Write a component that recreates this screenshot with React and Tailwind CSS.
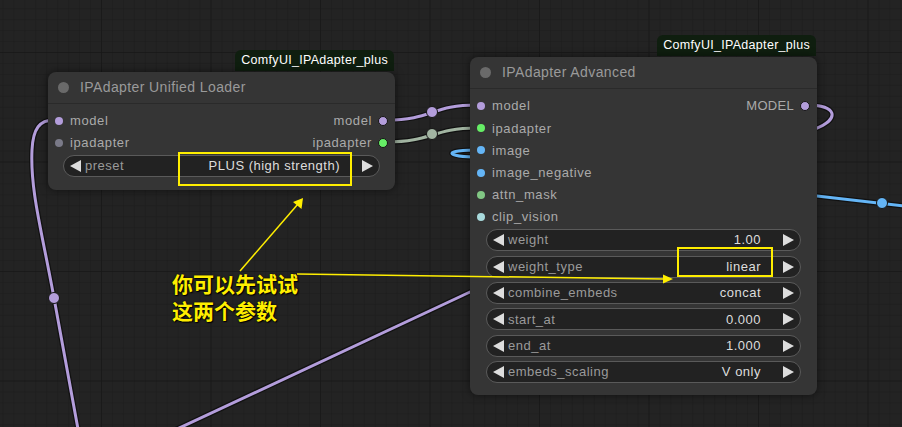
import React from 'react';

const Tri = ({ dir }) => (
    <svg width="11" height="12" viewBox="0 0 11 12" className="shrink-0">
        {dir === 'left' ? (
            <polygon points="11,0 11,12 0,6" fill="#dddddd" />
        ) : (
            <polygon points="0,0 0,12 11,6" fill="#dddddd" />
        )}
    </svg>
);

const Widget = ({ label, value }) => (
    <div className="flex h-[22px] items-center rounded-full border border-[#5a5a5a] bg-[#222222] px-[6px] text-[13px] tracking-[0.5px]">
        <Tri dir="left" />
        <span className="ml-[4px] text-[#9a9a9a]">{label}</span>
        <span className="ml-auto mr-[22px] text-[#dddddd]">{value}</span>
        <Tri dir="right" />
    </div>
);

const InRow = ({ label, color }) => (
    <div className="flex h-[22.2px] items-center">
        <span className="ml-[7px] h-[8px] w-[8px] rounded-full" style={{ background: color }} />
        <span className="ml-[7px] text-[13px] tracking-[0.6px] text-[#aaaaaa]">{label}</span>
    </div>
);

const OutDot = ({ color }) => (
    <span className="mr-[7px] h-[10px] w-[10px] rounded-full border border-[#151515]" style={{ background: color }} />
);

const Badge = () => (
    <div className="ml-auto mr-[1px] mb-[1px] flex h-[21px] items-center rounded-t-[6px] bg-[#0f1e0f] px-[6px] text-[12.5px] tracking-[0.3px] text-white">
        ComfyUI_IPAdapter_plus
    </div>
);

const Title = ({ text }) => (
    <div className="flex h-[32px] items-center border-b border-[#2a2a2a]">
        <span className="ml-[10px] h-[11px] w-[11px] rounded-full bg-[#6a6a6a]" />
        <span className="ml-[11px] text-[14px] tracking-[0.4px] text-[#9a9a9a]">{text}</span>
    </div>
);

const Grid = () => (
    <>
        <defs>
            <pattern id="small" x="2.45" y="8.2" width="10.95" height="10.95" patternUnits="userSpaceOnUse">
                <path d="M 0 0 L 10.95 0 M 0 0 L 0 10.95" stroke="#1c1c1c" strokeWidth="1" fill="none" />
            </pattern>
            <pattern id="big" x="-8.5" y="52" width="109.5" height="109.5" patternUnits="userSpaceOnUse">
                <path d="M 0 0 L 109.5 0 M 0 0 L 0 109.5" stroke="#181818" strokeWidth="1.6" fill="none" />
            </pattern>
        </defs>
        <rect width="902" height="427" fill="#232323" />
        <rect width="902" height="427" fill="url(#small)" />
        <rect width="902" height="427" fill="url(#big)" />
    </>
);

const Wire = ({ d, color }) => (
    <>
        <path d={d} stroke="#111111" strokeWidth="5.5" fill="none" strokeLinejoin="round" />
        <path d={d} stroke={color} strokeWidth="3" fill="none" strokeLinejoin="round" />
    </>
);

const Knot = ({ x, y, color }) => <circle cx={x} cy={y} r="5.5" fill={color} stroke="#151515" strokeWidth="1" />;

const LAV = '#b39ddb';
const SAGE = '#a2b5a2';
const BLUE = '#64b5f6';
const YEL = '#ffee00';

const App = () => {
    return (
        <div className="relative h-[427px] w-[902px] overflow-hidden bg-[#232323] font-['Liberation_Sans',Arial,sans-serif]">
            {/* canvas + links */}
            <svg width="902" height="427" className="absolute inset-0">
                <Grid />
                <Wire d="M 80 440 L 54 298 C 42 232, 30 190, 32 150 C 33 128, 40 120, 54 120" color={LAV} />
                <Knot x={54} y={298} color={LAV} />
                <Wire d="M 387 120 C 432 120, 432 105, 477 105" color={LAV} />
                <Knot x={432} y={112} color={LAV} />
                <Wire d="M 387 142 C 432 142, 432 128, 477 128" color={SAGE} />
                <Knot x={432} y={134} color={SAGE} />
                <Wire d="M 481 150 C 440 150, 445 157, 480 157 L 817 196 L 905 206" color={BLUE} />
                <Knot x={882} y={203} color={BLUE} />
                <Wire d="M 806 105 C 838 105, 840 119, 815 129 L 470 292 L 160 437" color={LAV} />
            </svg>

            {/* IPAdapter Unified Loader */}
            <div className="absolute left-[48px] top-[50px] flex w-[347px] flex-col">
                <Badge />
                <div className="h-[118px] rounded-[8px] bg-[#353535] shadow-[0_0_8px_rgba(0,0,0,0.55)]">
                    <Title text="IPAdapter Unified Loader" />
                    <div className="pt-[6px]">
                        <div className="flex h-[22px] items-center">
                            <span className="ml-[7px] h-[8px] w-[8px] rounded-full bg-[#b39ddb]" />
                            <span className="ml-[7px] text-[13px] tracking-[0.6px] text-[#aaaaaa]">model</span>
                            <span className="ml-auto mr-[6px] text-[13px] tracking-[0.6px] text-[#aaaaaa]">model</span>
                            <OutDot color="#b39ddb" />
                        </div>
                        <div className="flex h-[22px] items-center">
                            <span className="ml-[7px] h-[8px] w-[8px] rounded-full bg-[#7a7a88]" />
                            <span className="ml-[7px] text-[13px] tracking-[0.6px] text-[#aaaaaa]">ipadapter</span>
                            <span className="ml-auto mr-[6px] text-[13px] tracking-[0.6px] text-[#aaaaaa]">ipadapter</span>
                            <OutDot color="#66ee66" />
                        </div>
                        <div className="mx-[15px] mt-[1px]">
                            <Widget label="preset" value="PLUS (high strength)" />
                        </div>
                    </div>
                </div>
            </div>

            {/* IPAdapter Advanced */}
            <div className="absolute left-[470px] top-[35px] flex w-[347px] flex-col">
                <Badge />
                <div className="h-[338px] rounded-[8px] bg-[#353535] shadow-[0_0_8px_rgba(0,0,0,0.55)]">
                    <Title text="IPAdapter Advanced" />
                    <div className="pt-[6px]">
                        <div className="flex h-[22.2px] items-center">
                            <span className="ml-[7px] h-[8px] w-[8px] rounded-full bg-[#b39ddb]" />
                            <span className="ml-[7px] text-[13px] tracking-[0.6px] text-[#aaaaaa]">model</span>
                            <span className="ml-auto mr-[6px] text-[13px] tracking-[0.3px] text-[#aaaaaa]">MODEL</span>
                            <OutDot color="#b39ddb" />
                        </div>
                        <InRow label="ipadapter" color="#66ee66" />
                        <InRow label="image" color="#64b5f6" />
                        <InRow label="image_negative" color="#64b5f6" />
                        <InRow label="attn_mask" color="#81c784" />
                        <InRow label="clip_vision" color="#a8dadc" />
                        <div className="mx-[16px] mt-[1px] flex flex-col gap-[4.4px]">
                            <Widget label="weight" value="1.00" />
                            <Widget label="weight_type" value="linear" />
                            <Widget label="combine_embeds" value="concat" />
                            <Widget label="start_at" value="0.000" />
                            <Widget label="end_at" value="1.000" />
                            <Widget label="embeds_scaling" value="V only" />
                        </div>
                    </div>
                </div>
            </div>

            {/* annotation boxes */}
            <div className="absolute left-[178px] top-[152px] h-[34px] w-[174px] border-2 border-[#ffee00]" />
            <div className="absolute left-[677px] top-[247px] h-[30px] w-[96px] border-2 border-[#ffee00]" />

            {/* annotation arrows */}
            <svg width="902" height="427" className="pointer-events-none absolute inset-0">
                <line x1="240" y1="271" x2="298" y2="204" stroke={YEL} strokeWidth="1.5" />
                <polygon points="303,198 301.5,209 293,202" fill={YEL} />
                <line x1="297" y1="274" x2="664" y2="279" stroke={YEL} strokeWidth="1.5" />
                <polygon points="673,279 663,274.5 663,283.5" fill={YEL} />
            </svg>

            <div className="absolute left-[172px] top-[270px] text-[21px] font-bold leading-[27px] text-[#ffee00] [text-shadow:0_0_2px_#000,1px_1px_1px_#000] font-['Noto_Sans_CJK_SC',sans-serif]">
                <div>你可以先试试</div>
                <div>这两个参数</div>
            </div>
        </div>
    );
};

export default App;
